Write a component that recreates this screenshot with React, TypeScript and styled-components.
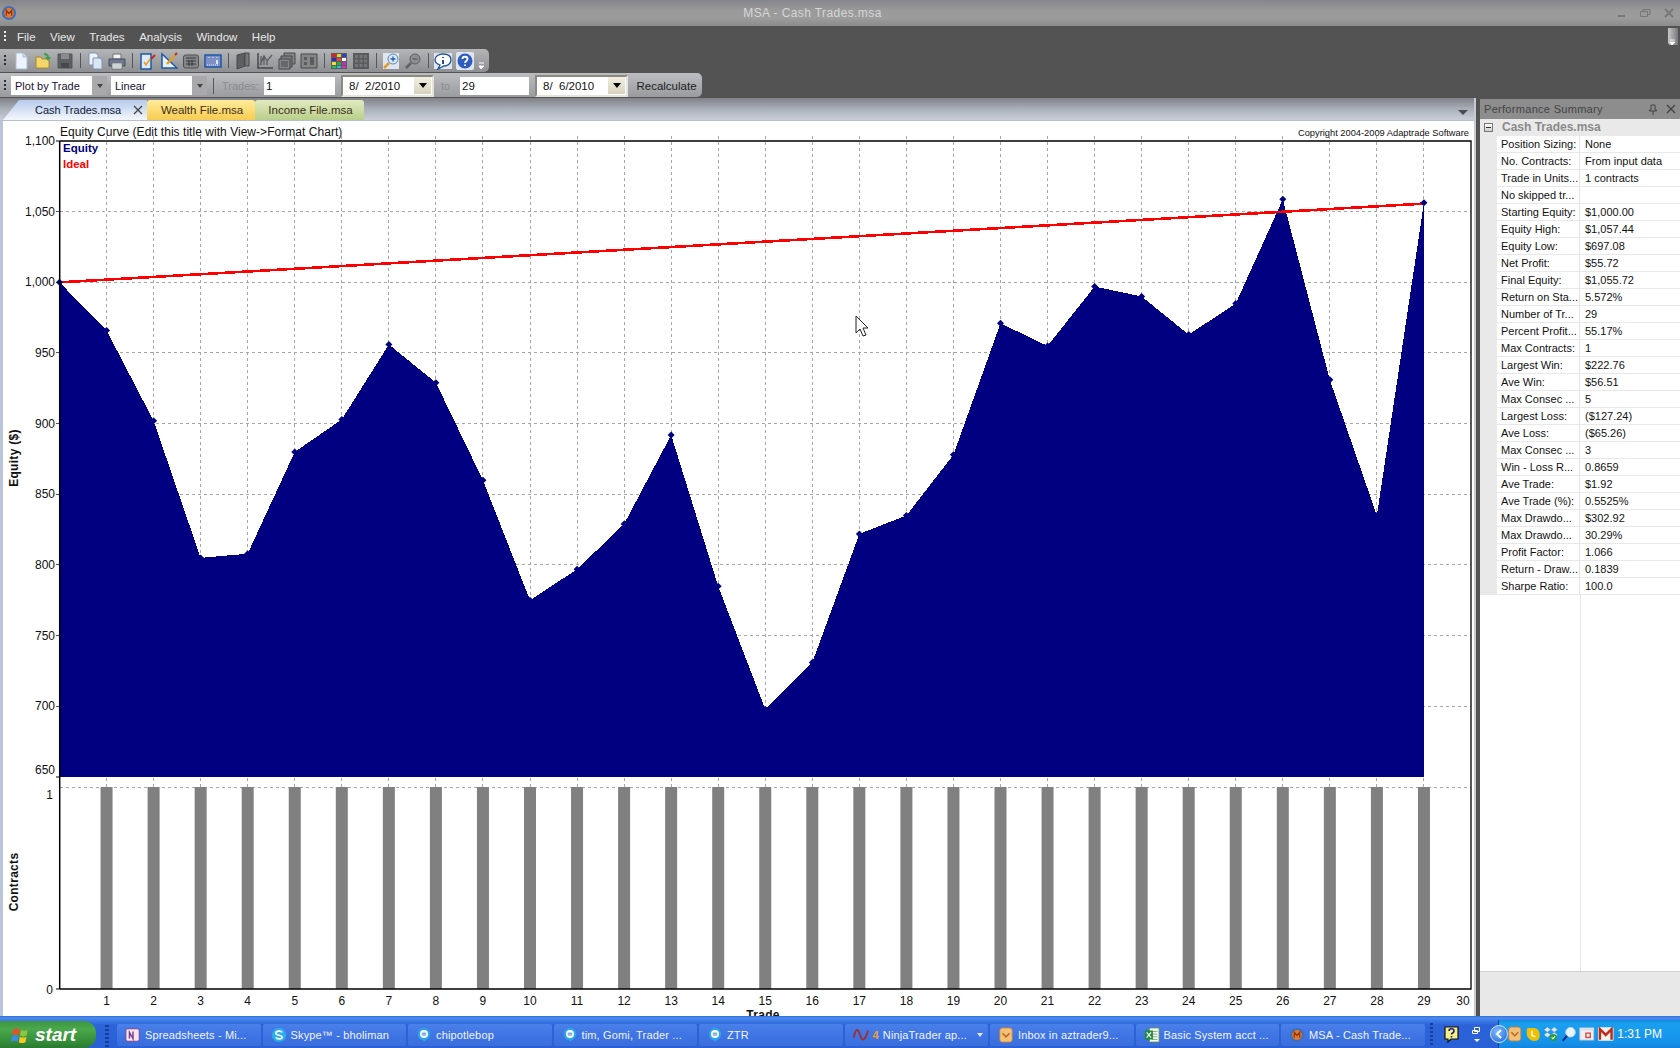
import React from 'react';
import styled, { createGlobalStyle } from 'styled-components';

const GlobalStyle = createGlobalStyle`
  html, body {
    margin: 0;
    padding: 0;
    background: #535353;
    overflow: hidden;
  }
  body, button, input {
    font-family: "Liberation Sans", Arial, sans-serif;
  }
`;

const Page = styled.div`
  width: 1680px;
  height: 1048px;
  display: flex;
  flex-direction: column;
  overflow: hidden;
  font-size: 11px;
  color: #111;
`;

/* title bar */
const TitleBar = styled.div`
  height: 26px;
  display: flex;
  align-items: center;
  background: linear-gradient(#84848c 0, #9a9a9a 40%, #9c9c9c 70%, #8b8b8b 100%);
`;

const TitleLogo = styled.div`
  width: 24px;
  padding-left: 1px;
  display: flex;
`;

const TitleText = styled.div`
  flex: 1;
  text-align: center;
  color: #d6d6d6;
  font-size: 12px;
  letter-spacing: 0.4px;
`;

const WindowControls = styled.div`
  width: 80px;
  display: flex;
  align-items: center;
  gap: 12px;
  padding-left: 17px;
  box-sizing: border-box;
`;

/* dark band with the menu and toolbars */
const DarkBand = styled.div`
  position: relative;
  background: #535353;
  height: 72px;
  display: flex;
  flex-direction: column;
`;

const MenuBar = styled.div`
  height: 23px;
  display: flex;
  align-items: center;
  color: #e8e8e8;
  font-size: 11.5px;
`;

const MenuList = styled.div`
  display: flex;
  gap: 14.5px;
  margin-left: 7px;
`;

const Grip = styled.div<{ $light?: boolean }>`
  width: 2px;
  height: 12px;
  margin: 0 4px 0 4px;
  flex: none;
  background: repeating-linear-gradient(
    ${(p) => (p.$light ? '#f0f0f0' : '#2c2c2c')} 0 2px,
    transparent 2px 4px
  );
`;

const DockGrip = styled.div`
  position: absolute;
  right: 2px;
  top: 2px;
  width: 10px;
  height: 17px;
  display: flex;
  align-items: flex-end;
  justify-content: center;
  background: linear-gradient(90deg, #c8c8c8, #77787e);
  border-radius: 0 0 0 3px;
`;

const ToolStrip = styled.div<{ $width: number; $light?: boolean }>`
  width: ${(p) => p.$width}px;
  height: 24px;
  margin-bottom: 1px;
  padding-top: ${(p) => (p.$light ? 1 : 0)}px;
  display: flex;
  align-items: center;
  box-sizing: border-box;
  border-radius: 0 5px 5px 0;
  background: ${(p) =>
    p.$light
      ? 'linear-gradient(#bcbdc0, #9a9b9e)'
      : 'linear-gradient(#b4b5b7, #8e8f92)'};
`;

const ToolButton = styled.div`
  width: 22px;
  height: 22px;
  flex: none;
  display: flex;
  align-items: center;
  justify-content: center;
`;

const ToolSep = styled.div`
  width: 1px;
  height: 15px;
  flex: none;
  margin: 0 3px 0 4px;
  background: #55565a;
`;

const Overflow = styled.div`
  margin-left: 2px;
  align-self: flex-end;
  padding-bottom: 2px;
  display: flex;
`;

const Select = styled.div`
  width: 96px;
  height: 19px;
  margin-right: 4px;
  flex: none;
  display: flex;
  align-items: center;
  background: #fff;
  box-sizing: border-box;
  padding-left: 4px;

  &:nth-child(2) {
    margin-left: 1px;
  }
`;

const SelectValue = styled.span`
  flex: 1;
  color: #1c1030;
`;

const SelectArrow = styled.span`
  width: 15px;
  height: 19px;
  background: #a9a9ab;
  display: flex;
  align-items: center;
  justify-content: center;
  &::after {
    content: '';
    border: 3px solid transparent;
    border-top: 4px solid #444;
    margin-top: 3px;
  }
`;

const BarSep = styled.div`
  width: 1px;
  height: 16px;
  flex: none;
  margin: 0 8px 0 2px;
  background: #54555a;
`;

const MutedLabel = styled.span<{ $width: number }>`
  width: ${(p) => p.$width}px;
  flex: none;
  color: #8a8b8e;
`;

const NumberField = styled.div<{ $width: number }>`
  width: ${(p) => p.$width}px;
  height: 18px;
  flex: none;
  background: #fff;
  padding-left: 2px;
  box-sizing: border-box;
  display: flex;
  align-items: center;
  font-size: 11.5px;
`;

const DateField = styled.div`
  width: 93px;
  height: 22px;
  flex: none;
  margin-left: 6px;
  box-sizing: border-box;
  background: #fff;
  border: 2px solid #e4e3dc;
  border-top-color: #8b8a80;
  border-left-color: #8b8a80;
  display: flex;
  align-items: center;
  padding-left: 6px;
  font-size: 11.5px;
  white-space: pre;
`;

const DateText = styled.span`
  flex: 1;
`;

const DateArrow = styled.span`
  width: 17px;
  height: 17px;
  margin-right: 1px;
  background: linear-gradient(#f2efe2, #d6d2bd);
  display: flex;
  align-items: center;
  justify-content: center;
  &::after {
    content: '';
    border: 4px solid transparent;
    border-top: 5px solid #000;
    margin-top: 4px;
  }
`;

const ToLabel = styled.span`
  flex: none;
  width: 12px;
  margin: 0 7px;
  color: #8a8b8e;
`;

const Recalc = styled.div`
  flex: 1;
  text-align: center;
  margin-left: 3px;
  font-size: 11.5px;
  color: #1d1d1d;
`;

/* workspace */
const Body = styled.div`
  flex: 1;
  min-height: 0;
  display: flex;
  background: #535353;
`;

const MainPane = styled.div`
  width: 1476px;
  flex: none;
  display: flex;
  flex-direction: column;
  box-sizing: border-box;
  border-right: 2px solid #c6c9d0;
`;

const TabStrip = styled.div`
  height: 22px;
  flex: none;
  display: flex;
  align-items: flex-end;
  padding-left: 3px;
  background: linear-gradient(#7f8186, #aab0ba 50%, #c9ced8);
`;

const Tab = styled.div<{ $from: string; $to: string; $width: number }>`
  width: ${(p) => p.$width}px;
  height: 20px;
  flex: none;
  display: flex;
  align-items: center;
  justify-content: center;
  padding-left: 2px;
  box-sizing: border-box;
  font-size: 11.5px;
  color: #3c2e20;
  border-radius: 3px 3px 0 0;
  background: linear-gradient(${(p) => p.$from}, ${(p) => p.$to});
`;

const ActiveTab = styled(Tab)`
  justify-content: flex-start;
  padding-left: 32px;
  font-size: 11px;
  color: #0d1838;
  border-radius: 0;
  clip-path: polygon(0 100%, 16px 0, 100% 0, 100% 100%);
`;

const TabClose = styled.span`
  margin-left: auto;
  margin-right: 4px;
  display: flex;
`;

const TabMenu = styled.div`
  margin: 0 6px 5px auto;
  border: 5px solid transparent;
  border-top: 5px solid #4a4c52;
  border-bottom: 0;
`;

const ChartFrame = styled.div`
  flex: 1;
  min-height: 0;
  background: #fff;
  border-top: 1px solid #b7bfce;
  border-left: 3px solid #bac5dc;
  overflow: hidden;
`;

const ChartSvg = styled.svg`
  display: block;
`;

const ChartTitle = styled.text`
  font-size: 12px;
  letter-spacing: 0.04px;
  fill: #111;
`;

const AxisText = styled.text<{ $anchor?: string }>`
  font-size: 12px;
  fill: #111;
  text-anchor: ${(p) => p.$anchor || 'middle'};
`;

const AxisTitle = styled.text`
  font-size: 12px;
  letter-spacing: 0.3px;
  font-weight: bold;
  fill: #111;
  text-anchor: middle;
`;

const LegendText = styled.text<{ $color: string }>`
  font-size: 11.5px;
  font-weight: bold;
  fill: ${(p) => p.$color};
`;

const Copyright = styled.text`
  font-size: 9.3px;
  fill: #111;
  text-anchor: end;
`;

/* performance summary */
const SidePanel = styled.div`
  width: 200px;
  margin-left: 4px;
  margin-top: 1px;
  flex: none;
  display: flex;
  flex-direction: column;
  background: #fff;
`;

const PanelTitle = styled.div`
  height: 20px;
  flex: none;
  display: flex;
  align-items: center;
  gap: 8px;
  padding: 0 4px;
  background: #8d8d8d;
  color: #444;
  letter-spacing: 0.3px;
`;

const PanelTitleText = styled.span`
  flex: 1;
`;

const GroupRow = styled.div`
  height: 17px;
  flex: none;
  padding-bottom: 1px;
  box-sizing: border-box;
  display: flex;
  align-items: center;
  background: #e9e9e9;
  color: #8a8a8a;
  font-weight: bold;
  font-size: 12px;
`;

const Collapse = styled.span`
  width: 7px;
  height: 7px;
  margin: 0 9px 0 4px;
  border: 1px solid #777;
  background: linear-gradient(#fff, #ccc);
  position: relative;
  &::after {
    content: '';
    position: absolute;
    left: 1px;
    right: 1px;
    top: 3px;
    height: 1px;
    background: #333;
  }
`;

const Row = styled.div`
  height: 17px;
  flex: none;
  display: flex;
  box-sizing: border-box;
  border-left: 17px solid #e9e9e9;
  border-bottom: 1px solid #e8e8e8;
  line-height: 16px;
`;

const RowLabel = styled.div`
  width: 83px;
  flex: none;
  box-sizing: border-box;
  padding-left: 4px;
  border-right: 1px solid #e4e4e4;
  white-space: nowrap;
  overflow: hidden;
`;

const RowValue = styled.div`
  padding-left: 5px;
  white-space: nowrap;
`;

const PanelRest = styled.div`
  flex: 1;
  display: flex;
  &::before {
    content: '';
    width: 100px;
    border-right: 1px solid #e8e8e8;
  }
`;

const DescriptionBox = styled.div`
  height: 45px;
  flex: none;
  background: #e8e8e8;
  border-top: 1px solid #d2d2d2;
  box-sizing: border-box;
`;

/* taskbar */
const Taskbar = styled.div`
  height: 32px;
  flex: none;
  display: flex;
  align-items: flex-end;
  background: linear-gradient(#2f6fdc 0, #4d8bee 2px, #3b79e4 5px, #2c63d8 9px, #2a60d6 100%);
`;

const StartButton = styled.div`
  width: 96px;
  height: 27px;
  flex: none;
  display: flex;
  align-items: center;
  gap: 4px;
  padding-left: 11px;
  box-sizing: border-box;
  border-radius: 0 12px 12px 0;
  background: linear-gradient(#3c9440, #4aa84c 30%, #338a38 80%, #2a7a30);
  color: #fff;
  font-size: 19px;
  font-weight: bold;
  font-style: italic;
`;

const TaskGrip = styled.div`
  width: 4px;
  height: 22px;
  margin: 0 8px 1px 9px;
  flex: none;
  background: repeating-linear-gradient(#153f9c 0 2px, transparent 2px 4px);
`;

const TaskList = styled.div`
  display: flex;
  gap: 2px;
  flex: none;
  margin-bottom: 2px;
`;

const TaskButton = styled.div`
  width: 143.5px;
  height: 22px;
  flex: none;
  display: flex;
  align-items: center;
  gap: 4px;
  padding: 0 5px 0 8px;
  box-sizing: border-box;
  border-radius: 2px;
  background: linear-gradient(#4a80ea, #3f74e4 50%, #3a6edd);
  color: #f2f5ff;
  font-size: 11px;
  letter-spacing: 0.15px;
  white-space: nowrap;
  overflow: hidden;
`;

const TaskText = styled.span`
  flex: 1;
`;

const TaskCount = styled.span`
  color: #f0a030;
  font-weight: bold;
`;

const TaskCaret = styled.span`
  border: 3px solid transparent;
  border-top: 4px solid #dce6ff;
  border-bottom: 0;
`;

const QuickLaunch = styled.div`
  flex: 1;
  height: 24px;
  display: flex;
  align-items: center;
  gap: 10px;
  margin-bottom: 2px;
  padding-left: 5px;
`;

const QuickGrip = styled.div`
  width: 3px;
  height: 22px;
  flex: none;
  background: repeating-linear-gradient(#153f9c 0 2px, transparent 2px 4px);
`;

const Tray = styled.div`
  width: 182px;
  height: 28px;
  flex: none;
  position: relative;
  display: flex;
  align-items: center;
  gap: 2.5px;
  padding-left: 8px;
  box-sizing: border-box;
  border-left: 1px solid #14409c;
  background: linear-gradient(#118ce4, #1aa0f0 15%, #1592ea 80%, #1484de);
`;

const TrayChevron = styled.div`
  position: absolute;
  left: -9px;
  top: 5px;
  width: 18px;
  height: 18px;
  border-radius: 50%;
  background: radial-gradient(circle at 40% 35%, #7fc0ff, #1a5fd8);
  border: 1px solid #cfe4ff;
  box-sizing: border-box;
  display: flex;
  align-items: center;
  justify-content: center;
`;

const Clock = styled.div`
  margin-left: auto;
  margin-right: 18px;
  color: #fff;
  font-size: 12px;
  white-space: nowrap;
`;

const I = ({ children, s = 18 }: { children: React.ReactNode; s?: number }) => (
  <svg width={s} height={s} viewBox="0 0 18 18">
    {children}
  </svg>
);

const MsaLogo = ({ s = 16 }: { s?: number }) => (
  <I s={s}>
    <circle cx="9" cy="9" r="8" fill="#3f6fb8" />
    <circle cx="9" cy="9" r="5.5" fill="#e8772a" />
    <path d="M6 12V6l3 3.5L12 6v6" fill="none" stroke="#8c3b10" strokeWidth="1.5" />
  </I>
);

const toolIcons: Record<string, React.ReactNode> = {
  newFile: (
    <I>
      <path d="M4 1h7l4 4v12H4z" fill="#eef4fb" stroke="#a8bcd6" />
      <path d="M11 1v4h4" fill="#c9dcf2" stroke="#a8bcd6" />
    </I>
  ),
  open: (
    <I>
      <path d="M2 5h5l1 2h7v9H2z" fill="#f4d76a" stroke="#a48a2c" />
      <path d="M10 1c3 0 5 2 5 4h2l-3 4-3-4h2c0-1-1-2-3-2z" fill="#3aa04a" />
    </I>
  ),
  save: (
    <I>
      <path d="M2 2h14v14H2z" fill="#5f6061" stroke="#54555a" />
      <path d="M5 2h8v5H5z" fill="#8b8c8e" />
      <path d="M5 11h8v5H5z" fill="#47484a" />
    </I>
  ),
  copy: (
    <I>
      <path d="M3 1h7l2 2v10H3z" fill="#eef3fa" stroke="#7f93b4" />
      <path d="M7 6h7l2 2v9H7z" fill="#dbe6f5" stroke="#7f93b4" />
    </I>
  ),
  print: (
    <I>
      <path d="M5 2h8v5H5z" fill="#f2f2f2" stroke="#707070" />
      <path d="M1 7h16v7H1z" fill="#6d7a92" stroke="#444c5e" />
      <path d="M4 11h10v6H4z" fill="#fff" stroke="#707070" />
      <path d="M5 13h8M5 15h8" stroke="#9aa" />
    </I>
  ),
  editBook: (
    <I>
      <path d="M3 2h10v15H3z" fill="#dfe9f7" stroke="#1d58a8" strokeWidth="1.5" />
      <path d="M6 10l2 3 4-6" fill="none" stroke="#e0a020" strokeWidth="1.5" />
      <path d="M13 7l4-4" stroke="#c02828" strokeWidth="2" />
    </I>
  ),
  editChart: (
    <I>
      <path d="M2 2v14h15z" fill="#e6f0fb" stroke="#1d58a8" strokeWidth="1.5" />
      <path d="M7 12L15 3" stroke="#e0a020" strokeWidth="2.5" />
      <path d="M15 3l2-2" stroke="#c02828" strokeWidth="2" />
    </I>
  ),
  table: (
    <I>
      <rect x="1.5" y="3" width="15" height="13" rx="2" fill="#858688" stroke="#4f5052" />
      <path d="M4 6h10M4 9h10M4 12h10M7 8v6M10 8v6" stroke="#38393b" />
    </I>
  ),
  ruler: (
    <I>
      <path d="M1 3h16v12H1z" fill="#7d8fc4" stroke="#1d58a8" strokeWidth="1.5" />
      <path d="M3 13h12M5 5v2M9 5v2M13 5v2" stroke="#e8eefc" strokeDasharray="1 1" />
      <path d="M13 8v4" stroke="#fff" strokeWidth="1.5" />
    </I>
  ),
  offBook: (
    <I>
      <path d="M3 3l8-2v13l-8 3z" fill="#5e5f61" stroke="#47484a" />
      <path d="M11 1h4v13h-4z" fill="#78797b" stroke="#47484a" />
    </I>
  ),
  offChart: (
    <I>
      <path d="M2 1v15h15" fill="none" stroke="#47484a" strokeWidth="1.5" />
      <path d="M4 13l4-9 3 5 5-6M5 4v9M8 6v7M11 9v4" fill="none" stroke="#5b5c5e" strokeWidth="1.3" />
    </I>
  ),
  offStack: (
    <I>
      <path d="M6 1h11v11H6z" fill="#858688" stroke="#47484a" />
      <path d="M3 4h11v11H3z" fill="#7d7e80" stroke="#47484a" />
      <path d="M1 7h11v10H1z" fill="#858688" stroke="#47484a" />
      <path d="M3 10h7M3 12h7M3 14h7" stroke="#47484a" />
    </I>
  ),
  offPlot: (
    <I>
      <path d="M1 2h16v14H1z" fill="#858688" stroke="#47484a" />
      <path d="M4 5h3v3H4zM4 10h3v3H4zM10 5h4v8h-4z" fill="#5b5c5e" />
    </I>
  ),
  colors: (
    <I>
      <rect x="1" y="1" width="16" height="16" fill="#5c5c60" />
      <path d="M2 2h4v3H2z" fill="#e02020" />
      <path d="M7 2h4v3H7z" fill="#f0d020" />
      <path d="M12 2h4v3h-4z" fill="#3040d0" />
      <path d="M2 6h4v3H2z" fill="#2030c0" />
      <path d="M7 6h4v3H7z" fill="#f04040" />
      <path d="M12 6h4v3h-4z" fill="#ffffff" />
      <path d="M2 10h4v3H2z" fill="#f0e030" />
      <path d="M7 10h4v3H7z" fill="#20b040" />
      <path d="M12 10h4v3h-4z" fill="#c030c0" />
      <path d="M2 14h4v2H2z" fill="#20c060" />
      <path d="M7 14h4v2H7z" fill="#20c0e0" />
      <path d="M12 14h4v2h-4z" fill="#e030a0" />
    </I>
  ),
  grayGrid: (
    <I>
      <rect x="1" y="1" width="16" height="16" fill="#5a5b5d" />
      <path d="M3 3h3v3H3zM7.5 3h3v3h-3zM12 3h3v3h-3zM3 7.5h3v3H3zM7.5 7.5h3v3h-3zM12 7.5h3v3h-3zM3 12h3v3H3zM7.5 12h3v3h-3zM12 12h3v3h-3z" fill="#757678" />
    </I>
  ),
  zoomIn: (
    <I>
      <rect x="1" y="1" width="16" height="16" fill="#dfe5ee" />
      <circle cx="11" cy="7" r="5" fill="#d8ebfb" stroke="#5b84b8" />
      <path d="M11 4.500v5M8.500 7h5" stroke="#2a5cae" strokeWidth="1.3" />
      <path d="M7 11l-5 5" stroke="#e39a24" strokeWidth="2.5" />
    </I>
  ),
  zoomOut: (
    <I>
      <circle cx="11" cy="7" r="5" fill="#8e8f92" stroke="#5c5d60" />
      <path d="M8.500 7h5" stroke="#5c5d60" strokeWidth="1.3" />
      <path d="M7 11l-5 5" stroke="#606164" strokeWidth="2.5" />
    </I>
  ),
  info: (
    <I>
      <rect x="0" y="1" width="18" height="16" fill="#dfe5ee" />
      <path d="M9 2c5 0 8 2 8 6s-4 6-7 6l-6 3 2-4C3 12 1 10 1 8c0-4 4-6 8-6z" fill="#fff" stroke="#1d4f9c" strokeWidth="1.3" />
      <path d="M9 5v1M9 8v4" stroke="#1d4f9c" strokeWidth="2" />
    </I>
  ),
  help: (
    <I>
      <rect x="0" y="0" width="18" height="18" rx="2" fill="#dfe5ee" />
      <circle cx="9" cy="9" r="7.5" fill="#2e5cc0" />
      <path d="M6.500 7c0-3 5-3 5 0 0 2-2.500 2-2.500 4M9 12.500v1.500" fill="none" stroke="#fff" strokeWidth="1.8" />
    </I>
  ),
};

const toolbarLayout = [
  'newFile', 'open', 'save', '|', 'copy', 'print', '|',
  'editBook', 'editChart', 'table', 'ruler', '|',
  'offBook', 'offChart', 'offStack', 'offPlot', '|',
  'colors', 'grayGrid', '|', 'zoomIn', 'zoomOut', '|', 'info', 'help',
];

const summaryRows: [string, string][] = [
  ['Position Sizing:', 'None'],
  ['No. Contracts:', 'From input data'],
  ['Trade in Units...', '1 contracts'],
  ['No skipped tr...', ''],
  ['Starting Equity:', '$1,000.00'],
  ['Equity High:', '$1,057.44'],
  ['Equity Low:', '$697.08'],
  ['Net Profit:', '$55.72'],
  ['Final Equity:', '$1,055.72'],
  ['Return on Sta...', '5.572%'],
  ['Number of Tr...', '29'],
  ['Percent Profit...', '55.17%'],
  ['Max Contracts:', '1'],
  ['Largest Win:', '$222.76'],
  ['Ave Win:', '$56.51'],
  ['Max Consec ...', '5'],
  ['Largest Loss:', '($127.24)'],
  ['Ave Loss:', '($65.26)'],
  ['Max Consec ...', '3'],
  ['Win - Loss R...', '0.8659'],
  ['Ave Trade:', '$1.92'],
  ['Ave Trade (%):', '0.5525%'],
  ['Max Drawdo...', '$302.92'],
  ['Max Drawdo...', '30.29%'],
  ['Profit Factor:', '1.066'],
  ['Return - Draw...', '0.1839'],
  ['Sharpe Ratio:', '100.0'],
];

const equity = [
  1000, 966, 902, 805, 808, 880, 903, 956, 929, 860, 775, 797, 829, 892, 785,
  698, 731, 822, 835, 878, 971, 955, 997, 990, 963, 985, 1058.7, 931, 835, 1056.3,
];

const xOf = (n: number) => 59.5 + n * 47.05;
const yOf = (v: number) => 141 + (1100 - v) * 1.4133;
const PLOT_RIGHT = 1471;
const GRID = '#a6a6a6';
const DASH = '3 3';

const EquityChart = () => {
  const trades = Array.from({ length: 30 }, (_, i) => i + 1);
  const fill = equity.map((v, i) => `${xOf(i)},${yOf(v)}`).join(' ');
  return (
    <ChartSvg width="1470" height="895" viewBox="3 121 1470 895">
      <ChartTitle x="60" y="136">
        Equity Curve (Edit this title with View-&gt;Format Chart)
      </ChartTitle>
      <Copyright x="1469" y="136">Copyright 2004-2009 Adaptrade Software</Copyright>

      {[1050, 1000, 950, 900, 850, 800, 750, 700].map((v) => (
        <g key={v}>
          <line x1="60" x2={PLOT_RIGHT} y1={yOf(v)} y2={yOf(v)} stroke={GRID} strokeDasharray={DASH} shapeRendering="crispEdges" />
          <line x1="56" x2="60" y1={yOf(v)} y2={yOf(v)} stroke="#555" shapeRendering="crispEdges" />
        </g>
      ))}
      {trades.slice(0, 29).map((n) => (
        <line key={n} x1={xOf(n)} x2={xOf(n)} y1="136" y2="787" stroke={GRID} strokeDasharray={DASH} shapeRendering="crispEdges" />
      ))}
      <line x1="60" x2={PLOT_RIGHT} y1="787" y2="787" stroke={GRID} strokeDasharray={DASH} shapeRendering="crispEdges" />

      <polygon points={`59.5,777 ${fill} ${xOf(29)},777`} fill="#000080" shapeRendering="crispEdges" />
      {trades.slice(0, 29).map((n) => (
        <rect key={n} x={xOf(n) - 6} y="787" width="12" height="202" fill="#808080" />
      ))}

      <line x1="60" x2={xOf(29)} y1={yOf(1000)} y2={yOf(1055.7)} stroke="#ff0000" strokeWidth="2.6" shapeRendering="crispEdges" />
      {equity.map((v, i) => (
        <polygon key={i} points={`${xOf(i) - 3.5},${yOf(v)} ${xOf(i)},${yOf(v) - 3.5} ${xOf(i) + 3.5},${yOf(v)} ${xOf(i)},${yOf(v) + 3.5}`} fill="#000080" />
      ))}

      <path d={`M60 141H${PLOT_RIGHT}V989H60`} fill="none" stroke="#000" strokeWidth="1.3" />
      <line x1="59.7" x2="59.7" y1="141" y2="989" stroke="#000" strokeWidth="1.5" />
      <line x1="56" x2="60" y1="777" y2="777" stroke="#000" />
      <line x1="56" x2="60" y1="141" y2="141" stroke="#000" />
      <line x1="56" x2="60" y1="989" y2="989" stroke="#000" />

      <LegendText $color="#000080" x="63" y="152">Equity</LegendText>
      <LegendText $color="#ff0000" x="63" y="168">Ideal</LegendText>

      {[1100, 1050, 1000, 950, 900, 850, 800, 750, 700].map((v) => (
        <AxisText key={v} $anchor="end" x="55" y={yOf(v) + 4}>
          {v.toLocaleString('en-US')}
        </AxisText>
      ))}
      <AxisText $anchor="end" x="55" y="774">650</AxisText>
      <AxisText $anchor="end" x="53" y="799">1</AxisText>
      <AxisText $anchor="end" x="53" y="994">0</AxisText>

      {trades.map((n) => (
        <AxisText key={n} x={n === 30 ? xOf(n) - 8 : xOf(n)} y="1005">{n}</AxisText>
      ))}
      <AxisTitle x="763" y="1019">Trade</AxisTitle>
      <AxisTitle transform="translate(18 458) rotate(-90)">Equity ($)</AxisTitle>
      <AxisTitle transform="translate(18 882) rotate(-90)">Contracts</AxisTitle>

      <path d="M856 316v17l4-4 3 7 3-1-3-7h5z" fill="#fff" stroke="#222" />
    </ChartSvg>
  );
};

const ChatIcon = () => (
  <I s={16}>
    <path d="M9 1c4 0 7 3 7 7s-3 6-5 7l-2 2-1-2c-3 0-6-3-6-7s3-7 7-7z" fill="#2aa6e8" />
    <circle cx="9" cy="8" r="4.5" fill="#fff" />
    <path d="M6.500 7h5M6.500 9h5" stroke="#2a70c8" />
  </I>
);

const OutlookIcon = () => (
  <I s={16}>
    <rect x="2" y="1" width="14" height="16" rx="3" fill="#f2c078" stroke="#c8803a" />
    <path d="M5 7l4 4 4-4" fill="none" stroke="#b86a1e" strokeWidth="1.8" />
  </I>
);

const taskItems: { icon: React.ReactNode; text: string; count?: string; caret?: boolean }[] = [
  {
    icon: (
      <I s={16}>
        <rect x="1" y="2" width="15" height="14" rx="2" fill="#f4e4f0" stroke="#7a3a86" />
        <path d="M5 13V6l4 7V5" fill="none" stroke="#7a3a86" strokeWidth="1.6" />
      </I>
    ),
    text: 'Spreadsheets - Mi...',
  },
  {
    icon: (
      <I s={16}>
        <circle cx="9" cy="9" r="8" fill="#29b0ea" />
        <path d="M12.500 6c-1-2-7-2-7 1 0 3 7 1.500 7 4.500 0 2.500-6 2.500-7 0" fill="none" stroke="#fff" strokeWidth="1.8" />
      </I>
    ),
    text: 'Skype™ - bholiman',
  },
  { icon: <ChatIcon />, text: 'chipotlebop' },
  { icon: <ChatIcon />, text: 'tim, Gomi, Trader ...' },
  { icon: <ChatIcon />, text: 'ZTR' },
  {
    icon: (
      <I s={16}>
        <path d="M1 12c2-12 5-10 7-3s5 8 9-5" fill="none" stroke="#a03030" strokeWidth="2.2" />
      </I>
    ),
    text: 'NinjaTrader ap...',
    count: '4',
    caret: true,
  },
  { icon: <OutlookIcon />, text: 'Inbox in aztrader9...' },
  {
    icon: (
      <I s={16}>
        <path d="M6 1h11v16H6z" fill="#f2f8f2" stroke="#5a8a5a" />
        <path d="M9 5h6M9 8h6M9 11h6M9 14h6" stroke="#6aa86a" />
        <path d="M1 4h9v10H1z" fill="#1f8a3a" />
        <path d="M3 6l5 6M8 6l-5 6" stroke="#fff" strokeWidth="1.3" />
      </I>
    ),
    text: 'Basic System acct ...',
  },
  { icon: <MsaLogo />, text: 'MSA - Cash Trade...' },
];

const trayIcons: React.ReactNode[] = [
  <OutlookIcon key="outlook" />,
  <I key="clock" s={16}>
    <path d="M3 2h7c4 0 7 3 7 8s-2 7-6 7c-5 0-9-4-9-9 0-3 0-5 1-6z" fill="#f0c000" />
    <path d="M8 5v6l4 1" fill="none" stroke="#fff" strokeWidth="1.6" />
  </I>,
  <I key="box" s={16}>
    <path d="M5 1L1 4l4 3 4-3zM13 1L9 4l4 3 4-3zM5 7L1 10l4 3 4-3zM13 7l-4 3 4 3 4-3z" fill="#dbe9f6" stroke="#5a88b8" strokeWidth="0.6" />
    <circle cx="12" cy="13" r="4" fill="#2a9a3a" />
    <path d="M10 13l1.500 1.500L14 11.500" fill="none" stroke="#fff" strokeWidth="1.2" />
  </I>,
  <I key="search" s={16}>
    <circle cx="11" cy="7" r="5.5" fill="#e8f4ff" stroke="#c8d8f0" />
    <path d="M7 11l-5 6" stroke="#18307c" strokeWidth="2.5" />
  </I>,
  <I key="window" s={16}>
    <rect x="1" y="2" width="16" height="14" fill="#f0eeee" stroke="#c8c4c4" />
    <path d="M1 2h16v3H1z" fill="#d8e2f0" />
    <rect x="8" y="8" width="5" height="5" fill="none" stroke="#d84040" strokeWidth="1.5" />
  </I>,
  <I key="gmail" s={18}>
    <rect x="1" y="2" width="16" height="14" rx="1" fill="#f4f2ec" />
    <path d="M3 15V4l6 6 6-6v11" fill="none" stroke="#c02a1a" strokeWidth="2.5" />
  </I>,
];

const App: React.FC = () => (
  <Page>
    <GlobalStyle />
    <TitleBar>
      <TitleLogo>
        <MsaLogo />
      </TitleLogo>
      <TitleText>MSA - Cash Trades.msa</TitleText>
      <WindowControls>
        <svg width="10" height="12" viewBox="0 0 10 12"><path d="M1 9h7" stroke="#777" strokeWidth="2" /></svg>
        <svg width="12" height="12" viewBox="0 0 12 12"><path d="M1.500 4.500h7v5h-7zM4 4.500v-2h7v5H8.500" fill="none" stroke="#777" /></svg>
        <svg width="12" height="12" viewBox="0 0 12 12"><path d="M2 2l8 8M10 2l-8 8" stroke="#777" strokeWidth="2" /></svg>
      </WindowControls>
    </TitleBar>

    <DarkBand>
      <MenuBar>
        <Grip $light />
        <MenuList>
          {['File', 'View', 'Trades', 'Analysis', 'Window', 'Help'].map((m) => (
            <span key={m}>{m}</span>
          ))}
        </MenuList>
      </MenuBar>
      <DockGrip>
        <svg width="8" height="6" viewBox="0 0 8 6">
          <path d="M1 1h5M1 3h5l-3 3z" fill="#fff" stroke="#fff" strokeWidth="0.8" />
        </svg>
      </DockGrip>
      <ToolStrip $width={489}>
        <Grip />
        {toolbarLayout.map((name, i) =>
          name === '|' ? (
            <ToolSep key={i} />
          ) : (
            <ToolButton key={i}>{toolIcons[name]}</ToolButton>
          ),
        )}
        <Overflow>
          <svg width="8" height="8" viewBox="0 0 8 8">
            <path d="M1 1h5M1 4h5l-3 3z" fill="#fff" stroke="#fff" />
          </svg>
        </Overflow>
      </ToolStrip>
      <ToolStrip $width={702} $light>
        <Grip />
        <Select>
          <SelectValue>Plot by Trade</SelectValue>
          <SelectArrow />
        </Select>
        <Select>
          <SelectValue>Linear</SelectValue>
          <SelectArrow />
        </Select>
        <BarSep />
        <MutedLabel $width={42}>Trades:</MutedLabel>
        <NumberField $width={71}>1</NumberField>
        <DateField>
          <DateText>8/  2/2010</DateText>
          <DateArrow />
        </DateField>
        <ToLabel>to</ToLabel>
        <NumberField $width={69}>29</NumberField>
        <DateField>
          <DateText>8/  6/2010</DateText>
          <DateArrow />
        </DateField>
        <Recalc>Recalculate</Recalc>
      </ToolStrip>
    </DarkBand>

    <Body>
      <MainPane>
        <TabStrip>
          <ActiveTab $width={144} $from="#b6cbec" $to="#f4f7fc">
            Cash Trades.msa
            <TabClose>
              <svg width="10" height="10" viewBox="0 0 10 10">
                <path d="M1 1l8 8M9 1L1 9" stroke="#444" strokeWidth="1.3" />
              </svg>
            </TabClose>
          </ActiveTab>
          <Tab $width={108} $from="#ffec9c" $to="#f8cc50">Wealth File.msa</Tab>
          <Tab $width={109} $from="#e2eac0" $to="#b8cf8a">Income File.msa</Tab>
          <TabMenu />
        </TabStrip>
        <ChartFrame>
          <EquityChart />
        </ChartFrame>
      </MainPane>

      <SidePanel>
        <PanelTitle>
          <PanelTitleText>Performance Summary</PanelTitleText>
          <svg width="10" height="11" viewBox="0 0 10 11"><path d="M3 1h4v5h1.500v1h-7V6H3zM5 7v4" fill="none" stroke="#444" /></svg>
          <svg width="10" height="10" viewBox="0 0 10 10"><path d="M1 1l8 8M9 1L1 9" stroke="#444" strokeWidth="1.4" /></svg>
        </PanelTitle>
        <GroupRow>
          <Collapse />
          Cash Trades.msa
        </GroupRow>
        {summaryRows.map(([label, value], i) => (
          <Row key={i}>
            <RowLabel>{label}</RowLabel>
            <RowValue>{value}</RowValue>
          </Row>
        ))}
        <PanelRest />
        <DescriptionBox />
      </SidePanel>
    </Body>

    <Taskbar>
      <StartButton>
        <svg width="20" height="20" viewBox="0 0 18 18">
          <path d="M2 4c2-1 4-1 6 0l-1 5c-2-1-4-1-6 0z" fill="#e8502a" />
          <path d="M9 4.500c2 1 4 1 6 0l-1 5c-2 1-4 1-6 0z" fill="#8cc63e" />
          <path d="M1 10c2-1 4-1 6 0l-1 5c-2-1-4-1-6 0z" fill="#3a8ce8" />
          <path d="M8 10.500c2 1 4 1 6 0l-1 5c-2 1-4 1-6 0z" fill="#f8c820" />
        </svg>
        start
      </StartButton>
      <TaskGrip />
      <TaskList>
        {taskItems.map((t) => (
          <TaskButton key={t.text}>
            {t.icon}
            {t.count && <TaskCount>{t.count}</TaskCount>}
            <TaskText>{t.text}</TaskText>
            {t.caret && <TaskCaret />}
          </TaskButton>
        ))}
      </TaskList>
      <QuickLaunch>
        <QuickGrip />
        <I>
          <path d="M2 2h13v12H8l-3 3v-3H2z" fill="#f6f080" stroke="#111" strokeWidth="1.2" />
          <path d="M6 6c0-3 5-3 5 0 0 2-2.500 2-2.500 3.500M8.500 11v1.500" fill="none" stroke="#1a1a8c" strokeWidth="1.6" />
        </I>
        <svg width="12" height="22" viewBox="0 0 12 22">
          <path d="M3.500 4.500h5v4h-5zM1.500 7.500h5v3h-5z" fill="#2a60d6" stroke="#fff" />
          <path d="M3 16h6l-3 3z" fill="#fff" />
        </svg>
      </QuickLaunch>
      <Tray>
        <TrayChevron>
          <svg width="8" height="10" viewBox="0 0 8 10">
            <path d="M6 1L2 5l4 4" fill="none" stroke="#fff" strokeWidth="2" />
          </svg>
        </TrayChevron>
        {trayIcons}
        <Clock>1:31 PM</Clock>
      </Tray>
    </Taskbar>
  </Page>
);

export default App;
